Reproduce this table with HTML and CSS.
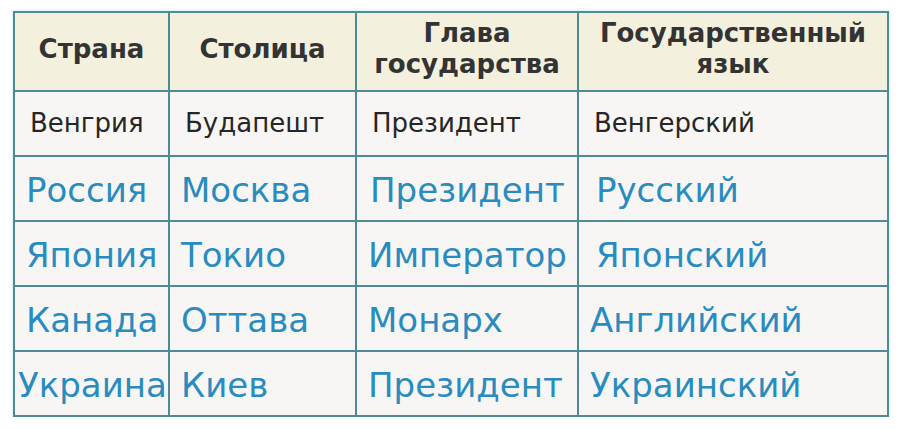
FILE: index.html
```html
<!DOCTYPE html>
<html lang="ru">
<head>
<meta charset="utf-8">
<title>Страны</title>
<link rel="stylesheet" href="styles.css">
</head>
<body>
<table class="grid">
  <colgroup>
    <col class="c1">
    <col class="c2">
    <col class="c3">
    <col class="c4">
  </colgroup>
  <thead>
    <tr class="head">
      <th>Страна</th>
      <th>Столица</th>
      <th>Глава<br>государства</th>
      <th>Государственный<br>язык</th>
    </tr>
  </thead>
  <tbody>
    <tr class="row sample">
      <td>Венгрия</td>
      <td>Будапешт</td>
      <td>Президент</td>
      <td>Венгерский</td>
    </tr>
    <tr class="row answer">
      <td class="p-russia">Россия</td>
      <td>Москва</td>
      <td class="p-mid">Президент</td>
      <td class="p-wide">Русский</td>
    </tr>
    <tr class="row answer">
      <td>Япония</td>
      <td>Токио</td>
      <td>Император</td>
      <td class="p-wide">Японский</td>
    </tr>
    <tr class="row answer">
      <td>Канада</td>
      <td>Оттава</td>
      <td>Монарх</td>
      <td>Английский</td>
    </tr>
    <tr class="row answer">
      <td class="p-tight">Украина</td>
      <td>Киев</td>
      <td>Президент</td>
      <td>Украинский</td>
    </tr>
  </tbody>
</table>
</body>
</html>
```
FILE: styles.css
```css
html, body {
  margin: 0;
  padding: 0;
  background: #ffffff;
}

body {
  padding: 11px 0 0 13px;
  font-family: "DejaVu Sans", "Liberation Sans", sans-serif;
}

.grid {
  border-collapse: collapse;
  table-layout: fixed;
  width: 874px;
  box-shadow: 0 0 3px rgba(120, 200, 225, 0.45);
}

.c1 { width: 155px; }
.c2 { width: 187px; }
.c3 { width: 222px; }
.c4 { width: 310px; }

.grid th,
.grid td {
  border: 2px solid #4f8b95;
  padding: 0;
  overflow: visible;
  white-space: nowrap;
}

.head th {
  height: 79px;
  background: #f3f0de;
  color: #333333;
  font-weight: bold;
  font-size: 26px;
  line-height: 31px;
  text-align: center;
  vertical-align: middle;
  padding-bottom: 5px;
  box-sizing: border-box;
}

.row td {
  height: 65px;
  background: #f8f6f5;
  text-align: left;
  vertical-align: middle;
  padding-left: 11px;
  box-sizing: border-box;
}

.sample td {
  font-size: 26px;
  color: #262626;
  padding-left: 15px;
  padding-bottom: 2px;
}

.answer td {
  font-size: 34px;
  color: #288cc0;
  padding-top: 3px;
}

.answer td.p-russia { padding-left: 11px; }
.answer td.p-mid { padding-left: 13px; }
.answer td.p-wide { padding-left: 17px; }
.answer td.p-tight { padding-left: 3px; }
```
